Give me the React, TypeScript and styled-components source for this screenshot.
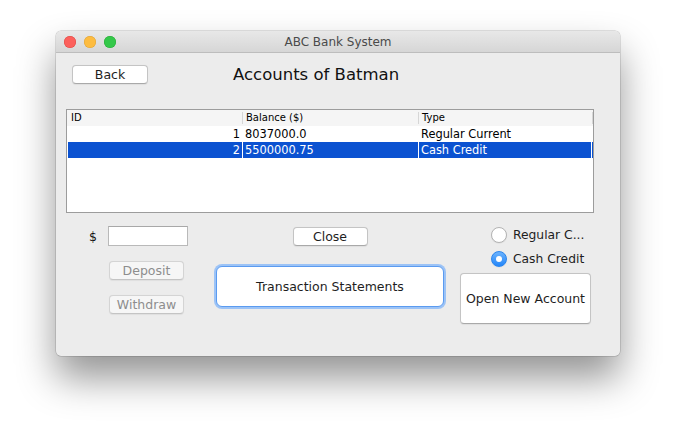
import React from "react";
import styled, { createGlobalStyle } from "styled-components";

const GlobalStyle = createGlobalStyle`
  html, body { margin: 0; padding: 0; background: #ffffff; }
  body { font-family: "DejaVu Sans", "Liberation Sans", sans-serif; }
  * { box-sizing: border-box; }
`;

const Page = styled.div`
  width: 676px;
  height: 436px;
  padding: 31px 0 0 56px;
  overflow: hidden;
`;

const Window = styled.div`
  width: 564px;
  height: 325px;
  background: #ececec;
  border-radius: 5px;
  box-shadow: 0 0 0 0.5px rgba(0, 0, 0, 0.22), 0 22px 38px rgba(0, 0, 0, 0.42);
  display: flex;
  flex-direction: column;
  overflow: hidden;
`;

const TitleBar = styled.div`
  height: 22px;
  flex: none;
  border-bottom: 1px solid #bdbdbd;
  background: linear-gradient(#e8e8e8, #d6d6d6);
  display: grid;
  grid-template-columns: 1fr auto 1fr;
  align-items: center;
`;

const Lights = styled.div`
  display: flex;
  gap: 8px;
  padding-left: 8px;
`;

const Light = styled.span<{ $fill: string; $edge: string }>`
  width: 12px;
  height: 12px;
  border-radius: 50%;
  background: ${(p) => p.$fill};
  box-shadow: inset 0 0 0 0.5px ${(p) => p.$edge};
`;

const Title = styled.div`
  font-size: 12px;
  color: #4a4a4a;
`;

const Content = styled.div`
  flex: 1;
  display: flex;
  flex-direction: column;
`;

const TopRow = styled.div`
  display: flex;
  align-items: center;
  height: 19px;
  margin-top: 12px;
  padding-left: 16px;
`;

const Heading = styled.div`
  margin-left: 85px;
  font-size: 16.5px;
  color: #111;
  line-height: 19px;
`;

const PushButton = styled.button<{ $w: number; $h?: number; $mt?: number; $ml?: number }>`
  width: ${(p) => p.$w}px;
  height: ${(p) => p.$h ?? 19}px;
  margin-top: ${(p) => p.$mt ?? 0}px;
  margin-left: ${(p) => p.$ml ?? 0}px;
  flex: none;
  padding: 0;
  font-family: "DejaVu Sans", "Liberation Sans", sans-serif;
  font-size: 12.5px;
  color: #1e1e1e;
  background: #ffffff;
  border: 1px solid #c4c4c4;
  border-bottom-color: #a9a9a9;
  border-radius: 4px;
  box-shadow: 0 0.5px 1px rgba(0, 0, 0, 0.06);

  &:disabled {
    color: #8d8d8d;
    background: #f6f6f6;
    border-color: #d4d4d4;
    border-bottom-color: #c4c4c4;
  }
`;

const FocusButton = styled(PushButton)`
  border: 1px solid #5b9bf0;
  border-radius: 6px;
  box-shadow: 0 0 0 2px #9cc3f6;
`;

const TableFrame = styled.div`
  margin: 25px 0 0 10px;
  width: 528px;
  height: 104px;
  border: 1px solid #9c9c9c;
  background: #ffffff;
`;

const HeaderRow = styled.div`
  display: grid;
  grid-template-columns: 175px 176px 174px;
  height: 16px;
  padding-left: 1px;
  background: #f5f5f5;
`;

const HeaderCell = styled.div`
  position: relative;
  font-size: 10px;
  line-height: 16px;
  padding-left: 3px;
  color: #000;

  &::after {
    content: "";
    position: absolute;
    right: 0;
    top: 2px;
    bottom: 2px;
    width: 1px;
    background: #d6d6d6;
  }
`;

const BodyRow = styled.div<{ $selected?: boolean }>`
  display: grid;
  grid-template-columns: 175px 176px 173px;
  height: 16px;
  margin-left: 1px;
  background: ${(p) => (p.$selected ? "#0b52d1" : "#ffffff")};
  color: ${(p) => (p.$selected ? "#ffffff" : "#000000")};
`;

const BodyCell = styled.div<{ $align?: "left" | "right" }>`
  font-size: 11.4px;
  line-height: 16px;
  padding: 0 2px;
  text-align: ${(p) => p.$align ?? "left"};
  border-right: 1px solid #ffffff;
  white-space: nowrap;
  overflow: hidden;
`;

const BottomArea = styled.div`
  display: flex;
  align-items: flex-start;
  margin-top: 13px;
  padding-left: 32px;
`;

const LeftCol = styled.div`
  width: 100px;
  display: flex;
  flex-direction: column;
`;

const AmountRow = styled.div`
  display: flex;
  align-items: center;
  height: 20px;
`;

const Dollar = styled.span`
  width: 20px;
  padding-left: 1px;
  font-size: 12.5px;
  color: #111;
`;

const AmountInput = styled.input`
  width: 80px;
  height: 20px;
  border: 1px solid #b9b9b9;
  border-top-color: #a8a8a8;
  background: #ffffff;
  padding: 0 3px;
  font-family: "DejaVu Sans", sans-serif;
  font-size: 12px;
  outline: none;
`;

const MidCol = styled.div`
  margin-left: 26px;
  width: 232px;
  display: flex;
  flex-direction: column;
  align-items: center;
`;

const RightCol = styled.div`
  margin-left: 14px;
  width: 132px;
  display: flex;
  flex-direction: column;
`;

const RadioRow = styled.label<{ $mt: number }>`
  display: flex;
  align-items: center;
  gap: 6px;
  height: 16px;
  margin-top: ${(p) => p.$mt}px;
  padding-left: 31px;
  font-size: 12.3px;
  color: #1e1e1e;
  white-space: nowrap;
`;

const RadioDot = styled.span<{ $on?: boolean }>`
  width: 16px;
  height: 16px;
  flex: none;
  border-radius: 50%;
  display: flex;
  align-items: center;
  justify-content: center;
  background: ${(p) => (p.$on ? "linear-gradient(#6cb3fd, #2486f9)" : "#ffffff")};
  border: 1px solid ${(p) => (p.$on ? "#2a85ee" : "#b3b3b3")};
  box-shadow: 0 0.5px 1px rgba(0, 0, 0, 0.08);

  &::after {
    content: "";
    display: ${(p) => (p.$on ? "block" : "none")};
    width: 6px;
    height: 6px;
    border-radius: 50%;
    background: #ffffff;
  }
`;

const rows = [
  { id: "1", balance: "8037000.0", type: "Regular Current", selected: false },
  { id: "2", balance: "5500000.75", type: "Cash Credit", selected: true },
];

export default function App() {
  return (
    <Page>
      <GlobalStyle />
      <Window>
        <TitleBar>
          <Lights>
            <Light $fill="#fc605c" $edge="#de4842" />
            <Light $fill="#fdbc40" $edge="#dea236" />
            <Light $fill="#34c84a" $edge="#27aa35" />
          </Lights>
          <Title>ABC Bank System</Title>
          <span />
        </TitleBar>
        <Content>
          <TopRow>
            <PushButton $w={76}>Back</PushButton>
            <Heading>Accounts of Batman</Heading>
          </TopRow>
          <TableFrame>
            <HeaderRow>
              <HeaderCell>ID</HeaderCell>
              <HeaderCell>Balance ($)</HeaderCell>
              <HeaderCell>Type</HeaderCell>
            </HeaderRow>
            {rows.map((r) => (
              <BodyRow key={r.id} $selected={r.selected}>
                <BodyCell $align="right">{r.id}</BodyCell>
                <BodyCell>{r.balance}</BodyCell>
                <BodyCell>{r.type}</BodyCell>
              </BodyRow>
            ))}
          </TableFrame>
          <BottomArea>
            <LeftCol>
              <AmountRow>
                <Dollar>$</Dollar>
                <AmountInput defaultValue="" />
              </AmountRow>
              <PushButton $w={75} $mt={15} $ml={21} disabled>
                Deposit
              </PushButton>
              <PushButton $w={75} $mt={15} $ml={21} disabled>
                Withdraw
              </PushButton>
            </LeftCol>
            <MidCol>
              <PushButton $w={75} $mt={1}>Close</PushButton>
              <FocusButton $w={228} $h={41} $mt={20}>
                Transaction Statements
              </FocusButton>
            </MidCol>
            <RightCol>
              <RadioRow $mt={1}>
                <RadioDot />
                Regular C...
              </RadioRow>
              <RadioRow $mt={8}>
                <RadioDot $on />
                Cash Credit
              </RadioRow>
              <PushButton $w={131} $h={51} $mt={6}>
                Open New Account
              </PushButton>
            </RightCol>
          </BottomArea>
        </Content>
      </Window>
    </Page>
  );
}
